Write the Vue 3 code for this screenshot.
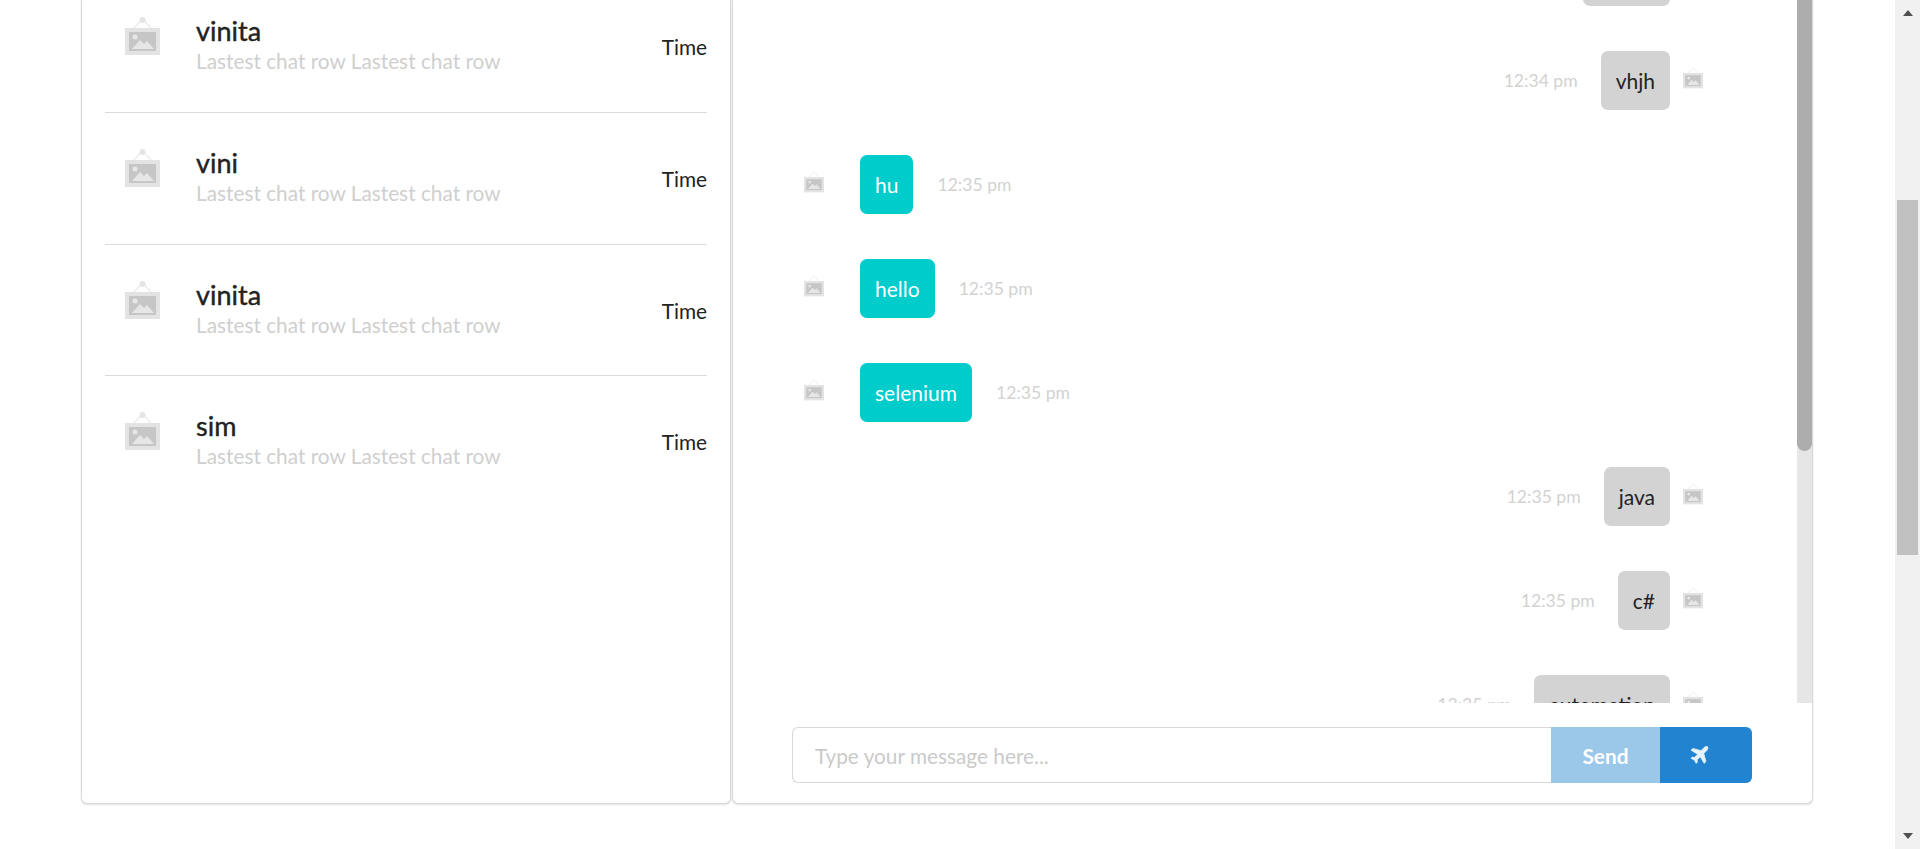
<script setup>
const chats = [
  { name: 'vinita', last: 'Lastest chat row Lastest chat row' },
  { name: 'vini', last: 'Lastest chat row Lastest chat row' },
  { name: 'vinita', last: 'Lastest chat row Lastest chat row' },
  { name: 'sim', last: 'Lastest chat row Lastest chat row' },
]

const messages = [
  { text: 'hello1', time: '12:34 pm', own: true },
  { text: 'vhjh', time: '12:34 pm', own: true },
  { text: 'hu', time: '12:35 pm', own: false },
  { text: 'hello', time: '12:35 pm', own: false },
  { text: 'selenium', time: '12:35 pm', own: false },
  { text: 'java', time: '12:35 pm', own: true },
  { text: 'c#', time: '12:35 pm', own: true },
  { text: 'automation', time: '12:35 pm', own: true },
]
</script>

<template>
  <div class="page">
    <div class="content">
      <div class="panel chat-list">
        <div v-for="(c, i) in chats" :key="i" class="chat-row">
          <svg class="thumb" viewBox="0 0 35 38">
            <path d="M17.5 2 9 11M17.5 2 26 11" stroke="#ececec" stroke-width="1.5" fill="none" />
            <circle cx="17.5" cy="3" r="3" fill="#e4e4e4" />
            <rect y="11" width="35" height="27" fill="#e3e3e3" />
            <rect x="4" y="15" width="27" height="19" fill="#c6c6c6" />
            <circle cx="10" cy="20" r="2.5" fill="#e6e6e6" />
            <path d="M7 32 15 23l4 4 3-3 7 8z" fill="#e6e6e6" />
          </svg>
          <div class="chat-text">
            <div class="chat-name">{{ c.name }}</div>
            <div class="chat-last">{{ c.last }}</div>
          </div>
          <div class="chat-time">Time</div>
        </div>
      </div>

      <div class="panel conversation">
        <div class="messages-wrap">
          <div class="messages">
            <div v-for="(m, i) in messages" :key="i" class="msg" :class="{ own: m.own }">
              <svg class="avatar" viewBox="0 0 35 38">
                <path d="M17.5 2 9 11M17.5 2 26 11" stroke="#ececec" stroke-width="1.5" fill="none" />
                <rect y="11" width="35" height="27" fill="#e3e3e3" />
                <rect x="4" y="15" width="27" height="19" fill="#c6c6c6" />
                <circle cx="10" cy="20" r="2.5" fill="#e6e6e6" />
                <path d="M7 32 15 23l4 4 3-3 7 8z" fill="#e6e6e6" />
              </svg>
              <div class="bubble">{{ m.text }}</div>
              <div class="msg-time">{{ m.time }}</div>
            </div>
          </div>
          <div class="inner-scroll"><div class="inner-thumb"></div></div>
        </div>
        <div class="composer">
          <input class="composer-input" type="text" placeholder="Type your message here..." />
          <button class="send-btn">Send</button>
          <button class="plane-btn">
            <svg viewBox="0 0 24 24" width="19" height="19">
              <path fill="#e8f3fb" stroke="#e8f3fb" stroke-width="1" stroke-linejoin="round" d="M22.6 1.4c-1.2-1.2-3.4-.8-4.7.5l-4 4L3.6 3.2 1.4 5.4l8.4 4.9-4 4.1-2.9-.4-1.5 1.5 4.1 2.3 2.3 4.1 1.5-1.5-.4-2.9 4.1-4 4.9 8.4 2.2-2.2-2.7-10.3 4-4c1.3-1.3 1.7-3.5.5-4z" />
            </svg>
          </button>
        </div>
      </div>
    </div>

    <div class="page-scroll">
      <span class="arrow up"></span>
      <div class="page-track"><div class="page-thumb"></div></div>
      <span class="arrow down"></span>
    </div>
  </div>
</template>

<style>
html, body {
  margin: 0;
  background: #fff;
  overflow: hidden;
}
</style>

<style scoped>
.page {
  display: flex;
  height: 849px;
  overflow: hidden;
  font-family: Lato, "Liberation Sans", sans-serif;
  color: #222;
}

.content {
  flex: 1;
  display: flex;
  align-items: flex-end;
  padding: 0 82px 45px 81px;
  gap: 1px;
  min-width: 0;
}

.panel {
  background: #fff;
  border: 1px solid #d8d8d8;
  border-top: none;
  border-radius: 0 0 6px 6px;
  box-shadow: 0 1px 2px rgba(0, 0, 0, 0.12);
  box-sizing: border-box;
  height: 804px;
}

.chat-list {
  width: 650px;
  padding: 0 23px;
}

.chat-row {
  display: flex;
  align-items: flex-start;
  height: 131.5px;
  box-sizing: border-box;
  border-bottom: 1px solid #dcdcdc;
  padding: 33px 0 0 20px;
}

.chat-row:first-child {
  height: 113px;
  padding-top: 14px;
}

.chat-row:last-child {
  border-bottom: none;
}

.thumb {
  width: 35px;
  height: 38px;
  margin-top: 3px;
  flex: none;
}

.chat-text {
  flex: 1;
  margin-left: 36px;
}

.chat-name {
  font-size: 27px;
  line-height: 33px;
  color: #222;
  -webkit-text-stroke: 0.4px #222;
}

.chat-last {
  font-size: 20.8px;
  line-height: 28px;
  color: #cfcfcf;
}

.chat-time {
  font-size: 20.8px;
  line-height: 24px;
  margin-top: 21px;
}

.conversation {
  flex: 1;
  display: flex;
  flex-direction: column;
  min-width: 0;
}

.messages-wrap {
  height: 703px;
  display: flex;
  overflow: hidden;
  flex: none;
}

.messages {
  flex: 1;
  display: flex;
  flex-direction: column;
  gap: 45px;
  margin-top: -53px;
  padding: 0 94px 0 71px;
  min-width: 0;
}

.msg {
  display: flex;
  align-items: center;
  flex: none;
  height: 59px;
}

.msg.own {
  flex-direction: row-reverse;
}

.avatar {
  width: 20px;
  height: 23px;
  margin-bottom: 6px;
  flex: none;
}

.bubble {
  background: #00cccc;
  color: #fff;
  font-size: 21px;
  line-height: 59px;
  height: 59px;
  padding: 0 15px;
  border-radius: 7px;
  margin-left: 36px;
}

.msg.own .bubble {
  background: #d3d3d3;
  color: #222;
  margin-left: 0;
  margin-right: 13px;
}

.msg-time {
  font-size: 17.6px;
  color: #d2d2d2;
  margin-left: 24px;
}

.msg.own .msg-time {
  margin-left: 0;
  margin-right: 23px;
}

.inner-scroll {
  width: 15px;
  flex: none;
  background: #e6e6e6;
}

.inner-thumb {
  height: 451px;
  background: #adadad;
  border-radius: 0 0 8px 8px;
}

.composer {
  flex: 1;
  display: flex;
  padding: 24px 60px 0 59px;
  box-sizing: border-box;
}

.composer-input {
  flex: 1;
  min-width: 0;
  height: 56px;
  box-sizing: border-box;
  border: 1px solid #d8d8d8;
  border-right: none;
  border-radius: 6px 0 0 6px;
  padding: 0 22px;
  font-family: inherit;
  font-size: 20.8px;
  outline: none;
}

.composer-input::placeholder {
  color: #cacaca;
}

.send-btn,
.plane-btn {
  height: 56px;
  border: none;
  padding: 0;
  font-family: inherit;
  display: flex;
  align-items: center;
  justify-content: center;
  color: #fff;
}

.send-btn {
  width: 109px;
  background: #9bc7e9;
  font-size: 20.8px;
  font-weight: 700;
}

.plane-btn {
  width: 92px;
  padding-right: 14px;
  background: #2284d1;
  border-radius: 0 6px 6px 0;
}

.page-scroll {
  width: 25px;
  flex: none;
  background: #f1f1f1;
  display: flex;
  flex-direction: column;
  align-items: center;
}

.arrow {
  width: 0;
  height: 0;
  flex: none;
  border-left: 5.5px solid transparent;
  border-right: 5.5px solid transparent;
}

.arrow.up {
  border-bottom: 6px solid #505050;
  margin: 10px 0 0;
}

.arrow.down {
  border-top: 6px solid #505050;
  margin: 0 0 10px;
}

.page-track {
  flex: 1;
  width: 100%;
  box-sizing: border-box;
  padding: 184px 2px 0;
}

.page-thumb {
  height: 355px;
  background: #c1c1c1;
}
</style>
